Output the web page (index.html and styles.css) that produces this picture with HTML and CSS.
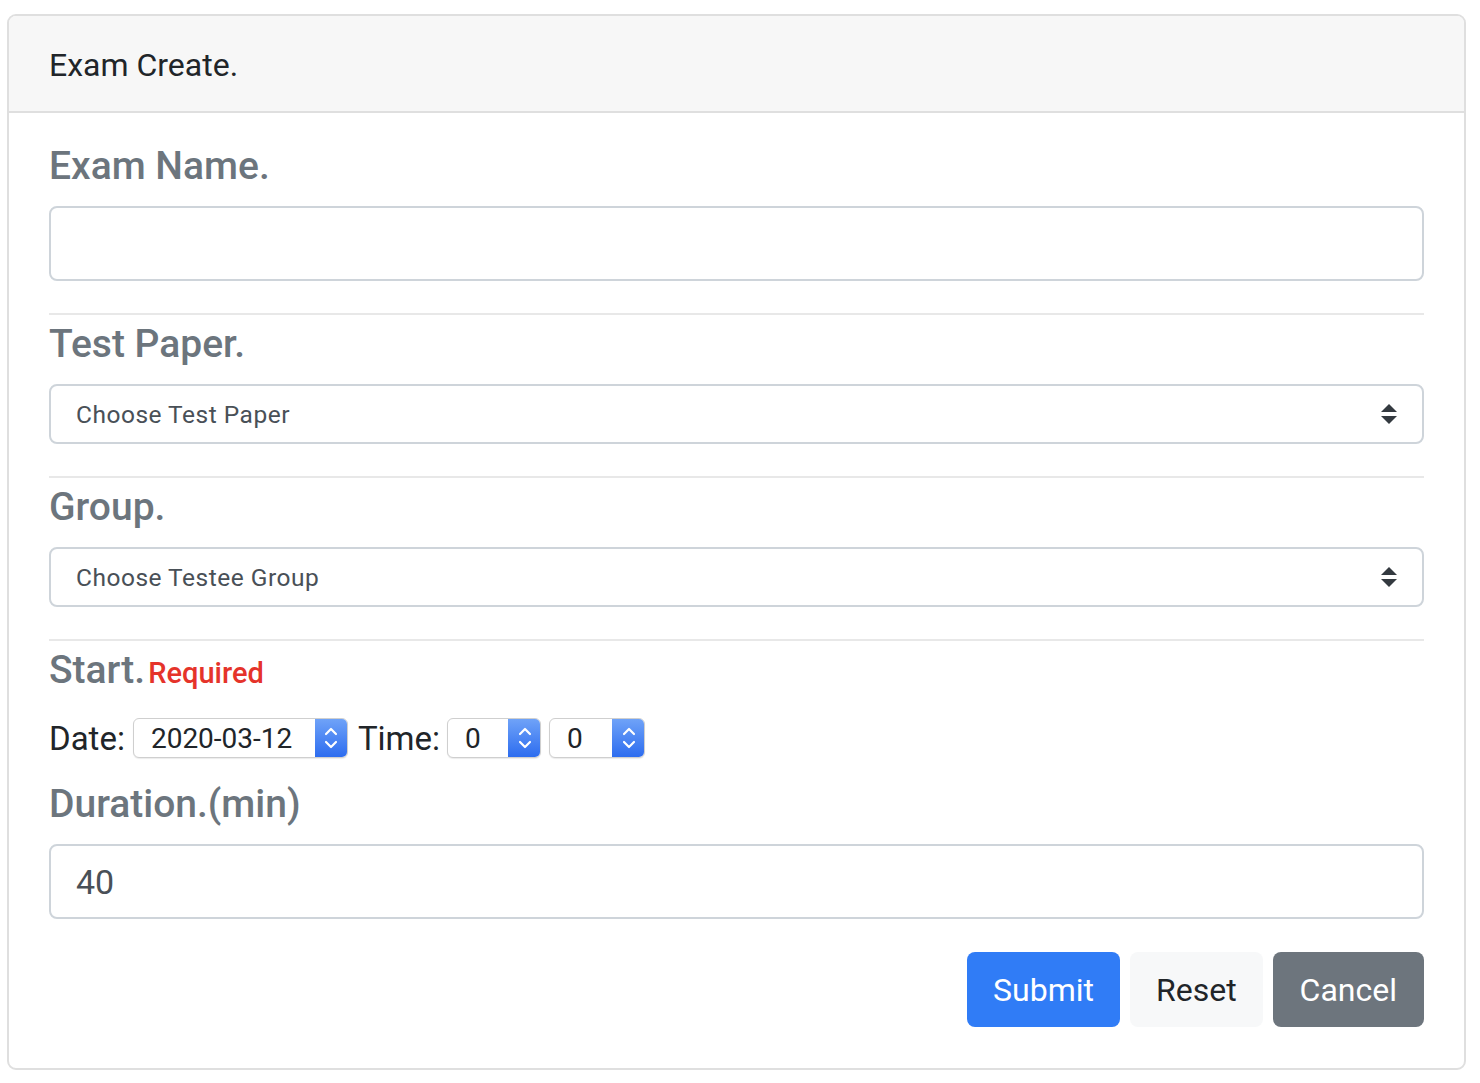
FILE: index.html
```html
<!DOCTYPE html>
<html lang="en">
<head>
<meta charset="utf-8">
<title>Exam Create</title>
<link rel="stylesheet" href="styles.css">
</head>
<body>
<div class="card">
  <div class="card-header">Exam Create.</div>
  <div class="card-body">
    <div class="label">Exam Name.</div>
    <div class="text-input"></div>
    <div class="rule"></div>

    <div class="label">Test Paper.</div>
    <div class="select">
      <span>Choose Test Paper</span>
      <svg class="sel-arrow" width="16" height="20" viewBox="0 0 16 20"><path d="M0 8 L8 0 L16 8 Z M0 12 L8 20 L16 12 Z" fill="#343a40"/></svg>
    </div>
    <div class="rule"></div>

    <div class="label">Group.</div>
    <div class="select">
      <span>Choose Testee Group</span>
      <svg class="sel-arrow" width="16" height="20" viewBox="0 0 16 20"><path d="M0 8 L8 0 L16 8 Z M0 12 L8 20 L16 12 Z" fill="#343a40"/></svg>
    </div>
    <div class="rule"></div>

    <div class="label">Start.<span class="required">Required</span></div>
    <div class="datetime">
      <span class="dt-label date-label">Date:</span>
      <div class="spin-box date-box">
        <span class="spin-value">2020-03-12</span>
        <div class="spinner"><svg width="14" height="26" viewBox="0 0 14 26"><path d="M2 9 L7 4 L12 9 M2 17 L7 22 L12 17" fill="none" stroke="#fff" stroke-width="2.2" stroke-linecap="round" stroke-linejoin="round"/></svg></div>
      </div>
      <span class="dt-label time-label">Time:</span>
      <div class="spin-box hour-box">
        <span class="spin-value">0</span>
        <div class="spinner"><svg width="14" height="26" viewBox="0 0 14 26"><path d="M2 9 L7 4 L12 9 M2 17 L7 22 L12 17" fill="none" stroke="#fff" stroke-width="2.2" stroke-linecap="round" stroke-linejoin="round"/></svg></div>
      </div>
      <div class="spin-box min-box">
        <span class="spin-value">0</span>
        <div class="spinner"><svg width="14" height="26" viewBox="0 0 14 26"><path d="M2 9 L7 4 L12 9 M2 17 L7 22 L12 17" fill="none" stroke="#fff" stroke-width="2.2" stroke-linecap="round" stroke-linejoin="round"/></svg></div>
      </div>
    </div>

    <div class="label duration-label">Duration.(min)</div>
    <div class="text-input"><span class="input-value">40</span></div>

    <div class="actions">
      <button class="btn btn-primary">Submit</button>
      <button class="btn btn-light">Reset</button>
      <button class="btn btn-secondary">Cancel</button>
    </div>
  </div>
</div>
</body>
</html>
```

FILE: styles.css
```css
* { box-sizing: border-box; }

body {
  margin: 0;
  font-family: Roboto, "Liberation Sans", Arial, sans-serif;
  color: #212529;
  background: #ffffff;
}

.card {
  margin: 14px 0 0 7px;
  width: 1459px;
  border: 2px solid #dfdfdf;
  border-radius: 9px;
  background: #fff;
  overflow: hidden;
}

.card-header {
  height: 97px;
  padding: 0 40px;
  line-height: 99px;
  font-size: 32px;
  color: #212529;
  background: #f7f7f7;
  border-bottom: 2px solid #dfdfdf;
}

.card-body {
  padding: 29px 40px 41px 40px;
}

.label {
  height: 48px;
  line-height: 48px;
  font-size: 39px;
  font-weight: 500;
  color: #6c757d;
  margin-bottom: 16px;
  white-space: nowrap;
}

.required {
  font-size: 29px;
  font-weight: 500;
  color: #e5332a;
  margin-left: 3px;
}

.text-input {
  height: 75px;
  border: 2px solid #ced4da;
  border-radius: 8px;
  display: flex;
  align-items: center;
  padding: 0 25px;
}

.input-value {
  font-size: 34px;
  color: #495057;
}

.rule {
  height: 2px;
  background: #e8e8e8;
  margin: 32px 0 5px 0;
}

.select {
  height: 60px;
  border: 2px solid #ced4da;
  border-radius: 8px;
  display: flex;
  align-items: center;
  justify-content: space-between;
  padding: 0 25px 0 25px;
  font-size: 24.5px;
  letter-spacing: 0.5px;
  color: #495057;
}

.sel-arrow { display: block; }

.datetime {
  display: flex;
  align-items: center;
  height: 40px;
  margin-top: 24px;
  margin-bottom: 22px;
}

.dt-label {
  font-size: 33px;
  color: #212529;
  margin-right: 7px;
}

.date-label { margin-right: 8px; }
.time-label { margin-left: 10px; }

.spin-box {
  height: 40px;
  display: flex;
  align-items: center;
  border: 1px solid #cfcfcf;
  border-radius: 6px;
  background: #fff;
  box-shadow: 0 1px 1px rgba(0,0,0,0.08);
  overflow: hidden;
  padding-left: 17px;
}

.date-box { width: 215px; }
.hour-box { width: 94px; margin-right: 8px; }
.min-box { width: 96px; }

.spin-value {
  font-size: 28px;
  color: #212529;
}

.spinner {
  margin-left: auto;
  align-self: stretch;
  width: 33px;
  margin-top: -1px;
  margin-bottom: -1px;
  margin-right: -1px;
  background: linear-gradient(#71a4f8, #2b6bef);
  border-radius: 0 6px 6px 0;
  display: flex;
  align-items: center;
  justify-content: center;
}

.actions {
  display: flex;
  justify-content: flex-end;
  gap: 10px;
  margin-top: 33px;
}

.btn {
  height: 75px;
  padding: 0 26px;
  border: none;
  border-radius: 8px;
  font-family: Roboto, "Liberation Sans", Arial, sans-serif;
  font-size: 32px;
}

.btn-primary { background: #307cf6; color: #fff; }
.btn-light { background: #f7f8f9; color: #212529; }
.btn-secondary { background: #6d757d; color: #fff; padding: 0 27px; }
```
